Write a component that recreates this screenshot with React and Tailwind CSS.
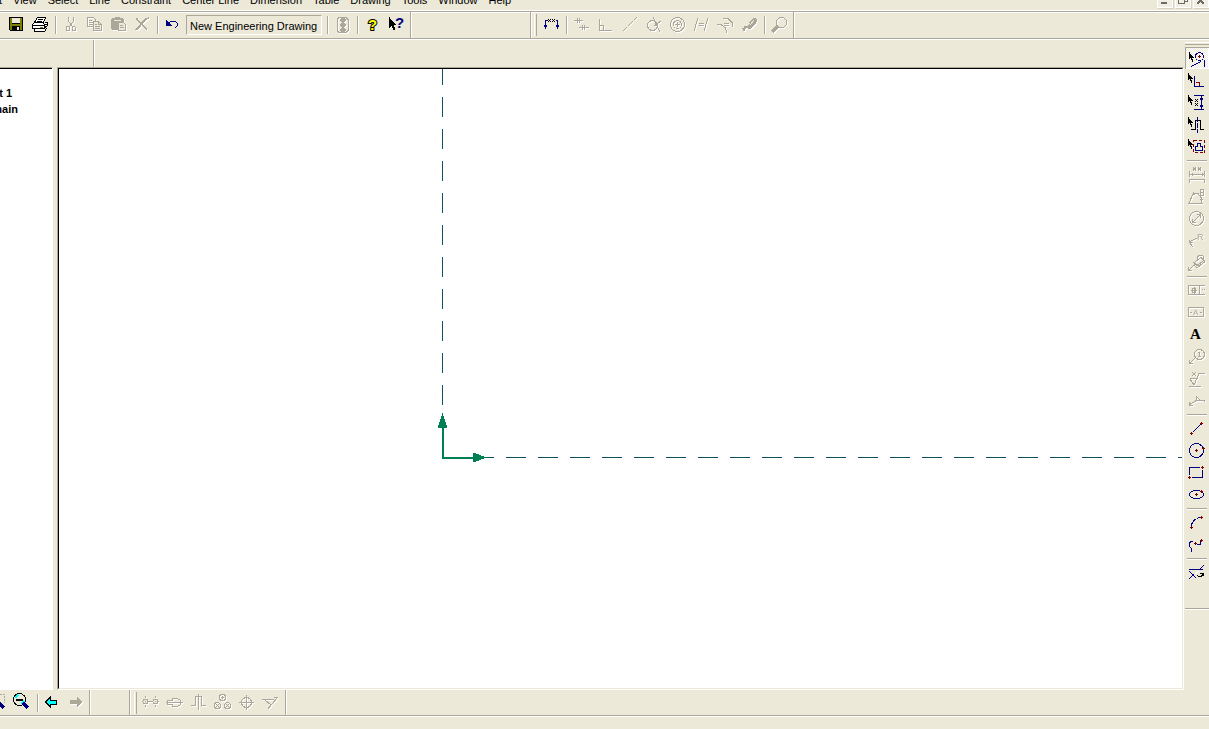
import React, { useState } from "react";
import clsx from "clsx";

const NAVY = "#000080";
const RED = "#800000";
const DIM = "#aca899";

/* ---------- shared pieces ---------- */

function Glyph({ disabled, className = "h-6 w-6", box = "0 0 24 24", children }) {
  return (
    <svg
      viewBox={box}
      fill="none"
      stroke={disabled ? DIM : "#000"}
      shapeRendering="crispEdges"
      aria-hidden="true"
      className={clsx("block shrink-0", className, disabled && "drop-shadow-[1px_1px_0_#fff]")}
    >
      {children}
    </svg>
  );
}

function ToolButton({ label, disabled, children }) {
  return (
    <button type="button" aria-label={label} title={label} disabled={disabled} className="h-6 w-6 shrink-0">
      <Glyph disabled={disabled}>{children}</Glyph>
    </button>
  );
}

function SideButton({ label, disabled, pressed, onClick, children }) {
  return (
    <button
      type="button"
      aria-label={label}
      title={label}
      disabled={disabled}
      aria-pressed={pressed}
      onClick={onClick}
      className={clsx(
        "h-[22px] w-6 shrink-0",
        pressed &&
          "bg-[repeating-conic-gradient(#fff_0_25%,#ece9d8_0_50%)] bg-[length:2px_2px] shadow-[inset_1px_1px_0_#aca899,inset_-1px_-1px_0_#fff]"
      )}
    >
      <Glyph disabled={disabled} className="h-[22px] w-6" box="0 0 24 22">
        {children}
      </Glyph>
    </button>
  );
}

function VSep() {
  return (
    <span className="flex h-[18px] w-1.5 shrink-0 self-center pl-[3px]">
      <span className="w-0.5 border-l border-r border-l-[#aca899] border-r-white" />
    </span>
  );
}

function HSep() {
  return (
    <span className="flex h-1.5 w-6 shrink-0 flex-col px-0.5 pt-[3px]">
      <span className="h-0.5 border-t border-b border-t-[#aca899] border-b-white" />
    </span>
  );
}

function Grip() {
  return (
    <span className="mx-0.5 h-[22px] w-[3px] shrink-0 self-center border-l border-r border-l-white border-r-[#aca899]" />
  );
}

function BarEnd() {
  return <span className="w-0.5 shrink-0 self-stretch border-l border-r border-l-[#aca899] border-r-white" />;
}

function Cursor({ x = 3, y = 4 }) {
  return (
    <path
      transform={`translate(${x} ${y})`}
      d="M0 0v7h1v-1h1v2h1v2h1v-3h-1v-1h2v-1h-1v-1h-1v-1h-1v-1h-1v-1z"
      fill="#000"
      stroke="none"
    />
  );
}

function Plus({ x, y }) {
  return <path d={`M${x - 1} ${y + 0.5}h3M${x + 0.5} ${y - 1}v3`} stroke={RED} />;
}

/* ---------- top bar ---------- */

const MENUS = ["View", "Select", "Line", "Constraint", "Center Line", "Dimension", "Table", "Drawing", "Tools", "Window", "Help"];

function WindowButton({ label, children }) {
  return (
    <button
      type="button"
      aria-label={label}
      className="h-4 w-4 border border-white bg-[#f1efe3] shadow-[1px_1px_0_#d6d2c2]"
    >
      <svg viewBox="0 0 14 14" fill="none" stroke="#6b6a66" shapeRendering="crispEdges" className="h-3.5 w-3.5">
        {children}
      </svg>
    </button>
  );
}

function MenuBar() {
  return (
    <nav className="-mt-2 flex h-[18px] shrink-0 items-start justify-between">
      <div className="flex gap-[11px] leading-4">
        <span className="flex w-0.5 justify-end">t</span>
        {MENUS.map((m) => (
          <button key={m} type="button" className="whitespace-nowrap">
            {m}
          </button>
        ))}
      </div>
      <div className="flex gap-0.5">
        <WindowButton label="Minimize">
          <path d="M3 10h6" strokeWidth="2" />
        </WindowButton>
        <WindowButton label="Restore">
          <path d="M2.5 5.5h6v5h-6zM5 3.5h6v5h-2" />
        </WindowButton>
        <WindowButton label="Close">
          <path d="M3 4l7 7M10 4l-7 7" strokeWidth="2" />
        </WindowButton>
      </div>
    </nav>
  );
}

function StandardBar() {
  return (
    <div className="flex w-[412px] shrink-0 items-center pl-1">
      <ToolButton label="Save">
        <path d="M5 4h14v14H6l-1-1z" fill="#000" stroke="none" />
        <path d="M6 5h2v6h8V5h2v12h-2v-4H8v4H6z" fill="#808000" stroke="none" />
        <path d="M8 5h8v5H8zM13 14h2v3h-2z" fill="#ece9d8" stroke="none" />
      </ToolButton>
      <ToolButton label="Print">
        <path d="M9.5 4.5h8l-2 5h-9zM6.5 9.5l-2 2v4h12v-4l-2-2M16.5 15.5l3-3v-3h-3" fill="#fff" />
        <path d="M10 6.5h5M9 8.5h5M5 12.5h11M17 11.5h2M17 13.5h2" />
        <path d="M6.5 15.5v3h10l2-3" fill="#fff" />
        <path d="M12 14.5h3" stroke="#808000" />
      </ToolButton>
      <VSep />
      <ToolButton label="Cut" disabled>
        <path d="M10.5 4v4l2 3 2 3M15.5 4v4l-2 3-2 3" />
        <path d="M8.5 13.5h2l1 1v3h-3zM14.5 13.5h2l1 1v3h-3z" />
      </ToolButton>
      <ToolButton label="Copy" disabled>
        <path d="M5.5 4.5h6l2 2v7h-8zM7 7.5h3M7 9.5h4M7 11.5h4" />
        <path d="M11.5 8.5h5l3 3v6h-8z" fill="#ece9d8" />
        <path d="M16.5 8v3.5h3M13 11.5h2M13 13.5h5M13 15.5h5" />
      </ToolButton>
      <ToolButton label="Paste" disabled>
        <path d="M5 6h1V5h3V4h5v1h3v1h1v4h-6v7H6l-1-1z" fill={DIM} stroke="none" />
        <path d="M8 7.5h7" stroke="#ece9d8" />
        <path d="M12.5 9.5h5l2 2v6h-7z" fill="#ece9d8" />
        <path d="M14 12.5h3M14 14.5h4" />
      </ToolButton>
      <ToolButton label="Delete" disabled>
        <path d="M6 5.5h2M7 6.5l10 10M17 5l-11 12M18 4.5h1" strokeWidth="2" />
      </ToolButton>
      <VSep />
      <ToolButton label="Undo">
        <path d="M6 7v6h6l-2-2-1-1z" fill={NAVY} stroke="none" />
        <path d="M8 11l3-3h4l2 2v3l-2 2" stroke={NAVY} />
      </ToolButton>
      <output className="mx-0.5 h-5 flex-1 whitespace-nowrap border border-b-white border-l-[#aca899] border-r-white border-t-[#aca899] px-[3px] leading-[20px]">
        New Engineering Drawing
      </output>
      <VSep />
      <ToolButton label="Regenerate" disabled>
        <path d="M9 4.5h7l2 2v11l-2 2H9l-2-2v-11z" />
        <path
          d="M11 5h4v1h1v2h-1v1h-1v1h1v1h1v2h-1v1h-1v1h1v1h1v2h-1v1h-4v-1h-1v-2h1v-1h1v-1h-1v-1h-1v-2h1v-1h1V9h-1V8h-1V6h1z"
          fill={DIM}
          stroke="none"
        />
      </ToolButton>
      <VSep />
      <ToolButton label="Help">
        <text
          x="8"
          y="17"
          fontSize="15"
          fontWeight="700"
          fill="#ff0"
          stroke="#000"
          strokeWidth="2"
          paintOrder="stroke"
          fontFamily="Liberation Sans, sans-serif"
        >
          ?
        </text>
      </ToolButton>
      <ToolButton label="Context help">
        <path d="M5 4v11h1v-1h1v-1h1v2h1v2h2v-3h-1v-2h2v-1h-1v-1h-1V9H9V8H8V7H7V6H6V4z" fill="#000" stroke="none" />
        <text
          x="11"
          y="15"
          fontSize="15"
          fontWeight="700"
          fill={NAVY}
          stroke="none"
          fontFamily="Liberation Sans, sans-serif"
        >
          ?
        </text>
      </ToolButton>
      <span className="pl-0.5" />
      <BarEnd />
    </div>
  );
}

function ConstraintBar() {
  return (
    <div className="flex shrink-0 items-center">
      <BarEnd />
      <Grip />
      <ToolButton label="Dimension">
        <path d="M6.5 16V7.5h2M18.5 16V7.5h-2" stroke={NAVY} />
        <path d="M5 12h1v-1h1v1h1v2H7v1H6v-1H5zM17 12h1v-1h1v1h1v2h-1v1h-1v-1h-1z" fill={NAVY} stroke="none" />
        <path d="M9 6l3 3M12 6l-3 3M13 6l3 3M16 6l-3 3" />
      </ToolButton>
      <VSep />
      <ToolButton label="Parallel lines" disabled>
        <path d="M5 7.5h9M8.5 5v5M10.5 5v5M10 14.5h10M13.5 12v5M15.5 12v5" />
      </ToolButton>
      <ToolButton label="Perpendicular" disabled>
        <path d="M6.5 6v11.5h12M6.5 12.5h4v5" />
      </ToolButton>
      <ToolButton label="Collinear" disabled>
        <path d="M5.5 18.5l14-14" strokeDasharray="7 1" />
      </ToolButton>
      <ToolButton label="Tangent" disabled>
        <circle cx="11.5" cy="12.5" r="5" />
        <path d="M12 4l7 15M20 8l-7 5" />
      </ToolButton>
      <ToolButton label="Concentric" disabled>
        <circle cx="12.5" cy="11.5" r="7" />
        <circle cx="12.5" cy="11.5" r="4" />
        <path d="M10 11.5h5M12.5 9v5" />
      </ToolButton>
      <ToolButton label="Equal length" disabled>
        <path d="M5 18L9 5M15 18l4-13M10 10.5h5M10 12.5h5" />
      </ToolButton>
      <ToolButton label="Equal radius" disabled>
        <path d="M4 11.5h4l4 3 2 5M10 5.5h5l4 4v4M11 10.5h5M11 12.5h5" />
      </ToolButton>
      <ToolButton label="Fix" disabled>
        <path d="M4 15h3v-2h3l5-7 2-1h2l1 2-1 4-6 5h-2l-1-1-2 1v2H6v-2z" fill={DIM} stroke="none" />
        <path d="M10 13l3-3M13 12l4-5" stroke="#ece9d8" />
      </ToolButton>
      <VSep />
      <ToolButton label="Show constraints" disabled>
        <path d="M9.5 7.5l3-3h4l3 3v4l-3 3h-4l-3-3z" />
        <path d="M11 13l-6 6" strokeWidth="3" />
      </ToolButton>
      <span className="pl-0.5" />
      <BarEnd />
    </div>
  );
}

/* ---------- right dock ---------- */

const SELECT_TOOLS = [
  {
    label: "Select entity",
    art: (
      <>
        <Cursor x={4} y={5} />
        <circle cx="14.5" cy="9.5" r="4" stroke={NAVY} />
        <Plus x={14} y={9} />
        <path d="M6 19.5l10-5M19.5 13v7" stroke={NAVY} />
      </>
    ),
  },
  {
    label: "Select line",
    art: (
      <>
        <Cursor />
        <path d="M10.5 13.5h4v4" stroke={RED} />
        <path d="M9.5 7v10.500H19" stroke={NAVY} />
      </>
    ),
  },
  {
    label: "Select dimension",
    art: (
      <>
        <Cursor />
        <path d="M9 4.5h10M9 18.5h10M16.5 5v13" stroke={NAVY} />
        <path d="M15 7h3v2h-3zM15 14h3v2h-3z" fill={NAVY} stroke="none" />
        <path d="M10 8l3 3M13 8l-3 3M10 12l3 3M13 12l-3 3" />
      </>
    ),
  },
  {
    label: "Select center line",
    art: (
      <>
        <Cursor />
        <path d="M6 16.5h4v-9h5v9h4" />
        <path d="M12.5 4v16" stroke={NAVY} strokeDasharray="5 1" />
      </>
    ),
  },
  {
    label: "Select view",
    art: (
      <>
        <Cursor />
        <path d="M8.5 5.5h11v12h-11z" stroke={RED} strokeDasharray="3 2" />
        <path d="M10.5 15.5v-4h2v-3h3v3h2v4z" stroke={NAVY} />
      </>
    ),
  },
];

const DIM_TOOLS = [
  {
    label: "Linear dimension",
    art: (
      <path d="M4.5 8v6M19.5 8v6M4 11.5h16M4 16.5h16M4.5 16v4M19.5 16v4M7 10v3M17 10v3M8.5 8V4l2 4V4M13.5 8V4l2 4V4" />
    ),
  },
  {
    label: "Angular dimension",
    art: <path d="M3 18.5h15M4 18l5-11M9 8.5h4l3 4v5M7 9.5h3M15 14.5h3M15.5 4.5h3v6h-3zM16 7.5h3" />,
  },
  {
    label: "Diameter dimension",
    art: (
      <>
        <circle cx="11.5" cy="11.5" r="7" />
        <path d="M8 15l7-7M7.5 12v3.5H11M12 7.5h3.5V11" />
      </>
    ),
  },
  {
    label: "Radius dimension",
    art: (
      <>
        <path d="M4 13l8-4M4 10.5v3h4M4 13l4 5" />
        <text x="12" y="11" fontSize="9" fill={DIM} stroke="none">
          R
        </text>
      </>
    ),
  },
  {
    label: "Thread note",
    art: (
      <path d="M4 19l6-6M3.5 16v3.500H7M9 11.5l7-5 3 3-7 5zM12.5 8V5.500l2-1h3l1 1v4M12 16.5l7-5v-2M9 11v3l3 3M11 13l4 3" />
    ),
  },
];

const NOTE_TOOLS = [
  {
    label: "Geometric tolerance",
    art: (
      <>
        <path d="M20 6.5H3.500v9H20M14.5 6v10M6 11.5h6M9.5 8v7M17 10.5h1M19 10.5h1" />
        <circle cx="9" cy="11.5" r="2" />
      </>
    ),
  },
  {
    label: "Datum",
    art: (
      <>
        <path d="M3.5 6.5h15v9h-15zM5 11.5h2M15 11.5h2" />
        <text x="8" y="14" fontSize="8" fill={DIM} stroke="none">
          A
        </text>
      </>
    ),
  },
  {
    label: "Text",
    on: true,
    art: (
      <text x="5" y="16" fontSize="15" fontWeight="700" fill="#000" stroke="none" fontFamily="Liberation Serif, serif">
        A
      </text>
    ),
  },
  {
    label: "Balloon",
    art: (
      <>
        <circle cx="14.5" cy="9.5" r="5" />
        <path d="M10 13l-6 6M4.5 15v3.500H8M13 7.5h1.500V12M13 11.5h3" />
      </>
    ),
  },
  {
    label: "Surface finish",
    art: <path d="M5 11.5h8M5 12l4 6 5-11.500h6M4 19.5h12M7 5l4 4M11 5L7 9" />,
  },
  {
    label: "Weld symbol",
    art: <path d="M4 16l8-5h8M4.5 13v3.500H8M11.5 7v5M11 7l4 4M20 13l-2-2" />,
  },
];

const DRAW_TOOLS = [
  {
    label: "Line",
    art: (
      <>
        <path d="M7.5 15.5l8-8" stroke={NAVY} />
        <Plus x={16} y={6} />
        <Plus x={6} y={16} />
      </>
    ),
  },
  {
    label: "Circle",
    art: (
      <>
        <circle cx="11.5" cy="11.5" r="7" stroke={NAVY} />
        <Plus x={11} y={11} />
        <Plus x={18} y={9} />
      </>
    ),
  },
  {
    label: "Rectangle",
    art: (
      <>
        <path d="M4.5 14V6.500H15M17.5 9v7.500H7" stroke={NAVY} />
        <Plus x={17} y={6} />
        <Plus x={4} y={16} />
      </>
    ),
  },
  {
    label: "Ellipse",
    art: (
      <>
        <ellipse cx="11.5" cy="11.5" rx="7" ry="4" stroke={NAVY} />
        <Plus x={11} y={11} />
        <Plus x={16} y={8} />
      </>
    ),
  },
];

const CURVE_TOOLS = [
  {
    label: "Arc",
    art: (
      <>
        <path d="M6.5 15c0-4 4-8 9-8.500" stroke={NAVY} strokeDasharray="4 1" />
        <Plus x={16} y={6} />
        <Plus x={6} y={16} />
      </>
    ),
  },
  {
    label: "Spline",
    art: (
      <>
        <path d="M8 8.5H5.500l-1 2v3l2 2v3M12 11.5h3l1-3" stroke={NAVY} />
        <Plus x={16} y={7} />
        <Plus x={10} y={10} />
      </>
    ),
  },
];

const TRIM_TOOLS = [
  {
    label: "Trim",
    art: (
      <>
        <path d="M4 8.5h14M13.5 9.5l5-5M3.5 18.5l5-5M4.5 10.5l7 7" stroke={NAVY} />
        <path d="M9.5 13.5l5-4" stroke="#fff" />
        <path d="M12 14.5l2 1h2l2-2M15 12.5h3.500V15" />
      </>
    ),
  },
];

const enabled = (tools) => tools.map((t) => ({ ...t, on: true }));

const GROUPS = [
  enabled(SELECT_TOOLS),
  DIM_TOOLS,
  NOTE_TOOLS,
  enabled(DRAW_TOOLS),
  enabled(CURVE_TOOLS),
  enabled(TRIM_TOOLS),
];

function SideDock() {
  const [active, setActive] = useState("Select entity");

  return (
    <aside className="flex w-[25px] shrink-0 flex-col pl-px">
      <div className="flex flex-col border-b border-[#aca899] pb-[25px] shadow-[0_1px_0_#fff]">
        <span className="mb-0.5 mt-[3px] h-[3px] border-t border-b border-b-[#aca899] border-t-white" />
        {GROUPS.map((group, i) => (
          <React.Fragment key={i}>
            {i > 0 && <HSep />}
            {group.map((t) => (
              <SideButton
                key={t.label}
                label={t.label}
                disabled={!t.on}
                pressed={active === t.label}
                onClick={() => setActive(t.label)}
              >
                {t.art}
              </SideButton>
            ))}
          </React.Fragment>
        ))}
      </div>
    </aside>
  );
}

/* ---------- work area ---------- */

const SUNKEN = "border border-b-white border-l-[#aca899] border-r-white border-t-[#aca899]";

function TreePane() {
  return (
    <section className="w-[53px] shrink-0 overflow-hidden border-b border-r border-t border-b-white border-r-white border-t-[#aca899]">
      <div className="h-full border-t border-t-black bg-white pt-4 font-bold leading-4">
        <div className="flex w-3 justify-end whitespace-nowrap">t 1</div>
        <div className="flex w-[18px] justify-end whitespace-nowrap">main</div>
      </div>
    </section>
  );
}

function DrawingSheet() {
  return (
    <main className={clsx("min-w-0 flex-1", SUNKEN)}>
      <div className="h-full border border-b-[#ece9d8] border-l-black border-r-[#ece9d8] border-t-black bg-white">
        <svg className="block h-full w-full" shapeRendering="crispEdges" aria-label="Sheet origin">
          <g stroke="#0f5060" strokeDasharray="20 12">
            <line x1="383.5" y1="336" x2="383.5" y2="0" />
            <line x1="415" y1="388.5" x2="100%" y2="388.5" />
          </g>
          <path d="M384 389V357M383 389h32" stroke="#007f55" strokeWidth="2" fill="none" />
          <path d="M383.5 344l5 15h-10zM428 388.5l-14 5v-10z" fill="#007f55" />
        </svg>
      </div>
    </main>
  );
}

/* ---------- bottom bar ---------- */

function BottomBar() {
  return (
    <div className="flex h-[26px] shrink-0 border-b border-[#aca899] shadow-[0_1px_0_#fff]">
      <div className="-ml-3.5 flex items-start">
        <ToolButton label="Zoom window">
          <path d="M14 4.5h4.500v8" stroke={DIM} strokeDasharray="2 1" />
          <path d="M12 12l6 6" stroke={NAVY} strokeWidth="3" />
        </ToolButton>
        <ToolButton label="Zoom out">
          <circle cx="9.5" cy="9.5" r="6" fill="#ece9d8" />
          <path d="M5 8l3-3M11 14l3-3" stroke="#0ff" strokeWidth="2" />
          <path d="M6 10h7" strokeWidth="2" />
          <path d="M13 13l5 5" stroke={NAVY} strokeWidth="3" />
        </ToolButton>
        <VSep />
        <ToolButton label="Back">
          <path d="M5.5 12l5-5v3h6v4h-6v3z" fill="#0ff" />
        </ToolButton>
        <ToolButton label="Forward" disabled>
          <path d="M18 12l-5-5v3H6v4h7v3z" fill={DIM} stroke="none" />
        </ToolButton>
        <span className="pl-px" />
        <BarEnd />
      </div>
      <div className="flex items-start pl-[38px]">
        <BarEnd />
        <span className="pl-px" />
        <Grip />
        <ToolButton label="Center line, two points" disabled>
          <path d="M3 11.5h17M6.5 6v2M6.5 15v2M16.5 6v2M16.5 15v2" />
          <circle cx="6.5" cy="11.5" r="2.5" fill="#ece9d8" />
          <circle cx="16.5" cy="11.5" r="2.5" fill="#ece9d8" />
          <path d="M6 11.5h1M16 11.5h1" />
        </ToolButton>
        <ToolButton label="Center line, shaft" disabled>
          <path d="M3 12.5h17M9.5 8.5h5l3 2v4l-3 2h-5v-2h-5v-4h5z" />
        </ToolButton>
        <ToolButton label="Symmetry line" disabled>
          <path d="M4 15.5h4v-9h6v9h5M11.5 4v16" />
        </ToolButton>
        <ToolButton label="Bolt circle" disabled>
          <circle cx="11.5" cy="7.5" r="3" />
          <circle cx="6.5" cy="15.5" r="3" />
          <circle cx="16.5" cy="15.5" r="3" />
          <path d="M10 7.5h3M11.5 6v3M5 14l3 3M8 14l-3 3M15 14l3 3M18 14l-3 3" />
        </ToolButton>
        <ToolButton label="Center mark" disabled>
          <circle cx="11.5" cy="12.5" r="5" />
          <path d="M4 12.5h15M11.5 5v15" />
        </ToolButton>
        <ToolButton label="Intersection" disabled>
          <path d="M3 9.5h12M15 7.5h4M18.5 7.5l-10 12M5.5 9.5l7 6" />
        </ToolButton>
        <span className="pl-0.5" />
        <BarEnd />
      </div>
    </div>
  );
}

export default function App() {
  return (
    <div className="flex h-screen flex-col overflow-hidden bg-[#ece9d8] font-['Liberation_Sans',Arial,sans-serif] text-[11px] text-black">
      <MenuBar />
      <header className="flex h-[29px] shrink-0 border-t border-t-white">
        <div className="flex flex-1 border-b border-t border-[#aca899] shadow-[inset_0_1px_0_#fff,0_1px_0_#fff]">
          <StandardBar />
          <div className="w-[118px] shrink-0" />
          <ConstraintBar />
        </div>
      </header>

      <div className="flex min-h-0 flex-1">
        <div className="flex min-w-0 flex-1 flex-col">
          <div className="flex h-7 shrink-0 pl-[93px] pt-px">
            <BarEnd />
          </div>
          <div className="flex min-h-0 flex-1 gap-1">
            <TreePane />
            <DrawingSheet />
          </div>
        </div>
        <SideDock />
      </div>

      <BottomBar />
      <footer className="h-[13px] shrink-0" />
    </div>
  );
}
